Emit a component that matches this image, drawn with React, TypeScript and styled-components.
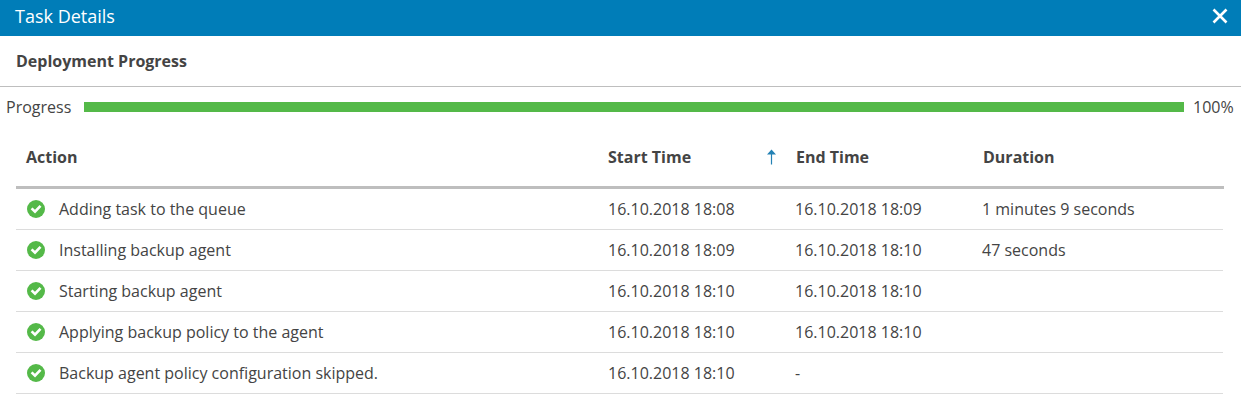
import React from 'react';
import styled, { createGlobalStyle } from 'styled-components';

const GlobalStyle = createGlobalStyle`
  * { box-sizing: border-box; }
  body {
    margin: 0;
    background: #fff;
    color: #444;
    font: 16px/20px "Open Sans", "Noto Sans", sans-serif;
  }
`;

const Dialog = styled.main`
  height: 406px;
  overflow: hidden;
  background: #fff;
`;

const TitleBar = styled.header`
  display: flex;
  align-items: center;
  justify-content: space-between;
  height: 36px;
  padding: 0 13px 4px 15px;
  background: #007db8;
  color: #fff;
`;

const Title = styled.h1`
  margin: 0;
  font-size: 18px;
  font-weight: 400;
  line-height: 24px;
`;

const CloseButton = styled.button`
  display: flex;
  padding: 0;
  border: 0;
  background: none;
  color: inherit;
`;

const SectionHeader = styled.h2`
  height: 51px;
  margin: 0;
  padding: 15px 16px 0;
  border-bottom: 1px solid #bebebe;
  font-size: 16px;
  font-weight: 700;
  line-height: 20px;
`;

const ProgressRow = styled.div`
  display: flex;
  align-items: center;
  height: 40px;
  padding: 0 0 0 6px;
`;

const ProgressLabel = styled.span`
  width: 78px;
`;

const Track = styled.div`
  width: 1100px;
  height: 10px;
  margin-right: 9px;
  background: #e4e4e4;
`;

const Fill = styled.div`
  height: 100%;
  background: #54b948;
`;

const Table = styled.section`
  width: 1208px;
  margin-left: 16px;
`;

const HeaderRow = styled.div`
  display: grid;
  grid-template-columns: 582px 188px 187px 1fr;
  height: 62px;
  padding: 20px 0 0 10px;
  border-bottom: 3px solid #bebebe;
  font-weight: 700;
`;

const HeaderCell = styled.div`
  display: flex;
  justify-content: space-between;
  padding-right: 19px;
`;

const Row = styled.div`
  display: grid;
  grid-template-columns: 582px 187px 187px 1fr;
  align-items: center;
  width: 1207px;
  height: 41px;
  padding-left: 10px;
  border-bottom: 1px solid #dcdcdc;
`;

const ActionCell = styled.div`
  display: flex;
  align-items: center;
  gap: 13px;
`;

const Close = () => (
  <svg width="16" height="16" viewBox="0 0 16 16" fill="none">
    <path d="M1.5 1.5 14.5 14.5M14.5 1.5 1.5 14.5" stroke="currentColor" strokeWidth="2.6" />
  </svg>
);

const SortUp = () => (
  <svg width="11" height="20" viewBox="0 0 11 20">
    <path d="M5.5 2.5 10 7.5H6.1V17.5H4.9V7.5H1Z" fill="#2482b5" />
  </svg>
);

const Success = () => (
  <svg width="20" height="20" viewBox="0 0 20 20" fill="none">
    <circle cx="10" cy="10" r="9" fill="#54b948" />
    <path d="M5.6 9.4 9 12.7 14.5 6.9" stroke="#fff" strokeWidth="2.7" />
  </svg>
);

const tasks = [
  ['Adding task to the queue', '16.10.2018 18:08', '16.10.2018 18:09', '1 minutes 9 seconds'],
  ['Installing backup agent', '16.10.2018 18:09', '16.10.2018 18:10', '47 seconds'],
  ['Starting backup agent', '16.10.2018 18:10', '16.10.2018 18:10', ''],
  ['Applying backup policy to the agent', '16.10.2018 18:10', '16.10.2018 18:10', ''],
  ['Backup agent policy configuration skipped.', '16.10.2018 18:10', '-', ''],
];

export default function App() {
  const progress = 100;
  return (
    <Dialog>
      <GlobalStyle />
      <TitleBar>
        <Title>Task Details</Title>
        <CloseButton aria-label="Close"><Close /></CloseButton>
      </TitleBar>
      <SectionHeader>Deployment Progress</SectionHeader>
      <ProgressRow>
        <ProgressLabel>Progress</ProgressLabel>
        <Track><Fill style={{ width: `${progress}%` }} /></Track>
        <span>{progress}%</span>
      </ProgressRow>
      <Table>
        <HeaderRow>
          <HeaderCell>Action</HeaderCell>
          <HeaderCell>Start Time<SortUp /></HeaderCell>
          <HeaderCell>End Time</HeaderCell>
          <HeaderCell>Duration</HeaderCell>
        </HeaderRow>
        {tasks.map(([action, start, end, duration]) => (
          <Row key={action}>
            <ActionCell><Success />{action}</ActionCell>
            <span>{start}</span>
            <span>{end}</span>
            <span>{duration}</span>
          </Row>
        ))}
      </Table>
    </Dialog>
  );
}
